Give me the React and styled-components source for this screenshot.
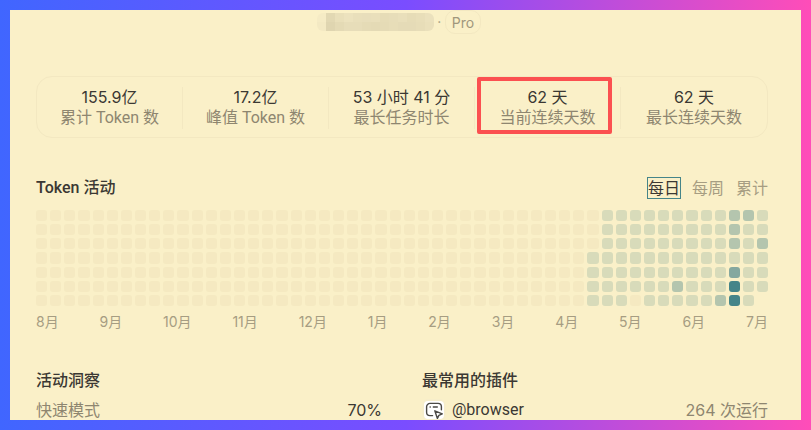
import React, { useState } from 'react';

import styled, { createGlobalStyle } from 'styled-components';

const stats = [
  { value: '155.9亿', label: '累计 Token 数' },
  { value: '17.2亿', label: '峰值 Token 数' },
  { value: '53 小时 41 分', label: '最长任务时长' },
  { value: '62 天', label: '当前连续天数', marked: true },
  { value: '62 天', label: '最长连续天数' },
];

const ranges = ['每日', '每周', '累计'];

const months = ['8月', '9月', '10月', '11月', '12月', '1月', '2月', '3月', '4月', '5月', '6月', '7月'];

const levelColors = ['#f5e9c1', '#d8dbba', '#b4c5ae', '#85a89f', '#458589'];

// weeks before the first active one are all zero
const emptyWeeks = Array(39).fill('0000000');
const activeWeeks = [
  '0001111',
  '1111111',
  '1111111',
  '1111110',
  '1111111',
  '1111111',
  '1111121',
  '1111111',
  '1111111',
  '1111112',
  '2221344',
  '2111111',
  '112111',
];
const days = [...emptyWeeks, ...activeWeeks].join('').split('').map(Number);

// two rows of nine pixel blocks hiding the account name
const maskRows = [
  ['#f5ebc5', '#e2d8b3', '#e9dfba', '#ece2be', '#e9dfbb', '#e8debb', '#e9dfbb', '#e6dcb7', '#e7ddb9', '#e9dfbb', '#e6dcb7', '#e8deb9', '#ebe1bd'],
  ['#f3e9c3', '#dfd5b0', '#e4dab5', '#e7ddb9', '#e7ddb9', '#e5dbb6', '#e4dab5', '#e5dbb6', '#e7ddb8', '#e5dbb7', '#e5dbb7', '#e7ddb8', '#eae0bb'],
];

const NameMask = () => (
  <svg width='117' height='18' viewBox='0 0 117 18' aria-hidden='true'>
    <clipPath id='mask-shape'>
      <rect width='117' height='18' rx='6' />
    </clipPath>
    <g clipPath='url(#mask-shape)' shapeRendering='crispEdges'>
      {maskRows.map((row, y) =>
        row.map((fill, x) => <rect key={`${x}-${y}`} x={x * 9} y={y * 9} width='9' height='9' fill={fill} />)
      )}
    </g>
  </svg>
);

const BrowserIcon = () => (
  <svg width='20' height='20' viewBox='0 0 20 20' fill='none' stroke='#4b4945' strokeWidth='1.4' aria-hidden='true'>
    <path d='M8.6 15.6H6A3.4 3.4 0 0 1 2.6 12.2V6.8A3.4 3.4 0 0 1 6 3.4h8a3.4 3.4 0 0 1 3.4 3.4v3' strokeLinecap='round' />
    <path d='M5.6 7h1.2M8.8 7h5' />
    <path d='M10.8 10.8l2.6 7.6 1.5-3 3.4-1.5z' strokeLinejoin='round' />
  </svg>
);

const App = () => {
  const [range, setRange] = useState('每日');

  return (
    <Frame>
      <GlobalStyle />
      <Panel>
        <Account>
          <NameMask />
          <Dot>·</Dot>
          <Plan>Pro</Plan>
        </Account>

        <Stats>
          {stats.map((stat) => (
            <Stat key={stat.label}>
              <dd>{stat.value}</dd>
              <dt>{stat.label}</dt>
              {stat.marked && <Marker />}
            </Stat>
          ))}
        </Stats>

        <SectionHeader>
          <Title>Token 活动</Title>
          <Ranges>
            {ranges.map((name) => (
              <RangeButton key={name} type='button' $active={name === range} onClick={() => setRange(name)}>
                {name}
              </RangeButton>
            ))}
          </Ranges>
        </SectionHeader>
        <Heatmap>
          {days.map((level, i) => (
            <Day key={i} $level={level} />
          ))}
        </Heatmap>
        <Months>
          {months.map((month) => (
            <span key={month}>{month}</span>
          ))}
        </Months>

        <Columns>
          <section>
            <Title>活动洞察</Title>
            <Row>
              <Muted>快速模式</Muted>
              <span>70%</span>
            </Row>
          </section>
          <section>
            <Title>最常用的插件</Title>
            <Row>
              <Plugin>
                <PluginIcon>
                  <BrowserIcon />
                </PluginIcon>
                @browser
              </Plugin>
              <Muted>264 次运行</Muted>
            </Row>
          </section>
        </Columns>
      </Panel>
    </Frame>
  );
};

const labelFont = "Roboto, 'Noto Sans CJK SC', sans-serif";

const GlobalStyle = createGlobalStyle`
  * {
    box-sizing: border-box;
  }
  body {
    margin: 0;
    font-family: Inter, 'Noto Sans CJK SC', sans-serif;
    font-size: 16px;
    line-height: 20px;
    color: #3b3833;
  }
`;

const Frame = styled.div`
  height: 100vh;
  padding: 10px;
  background: linear-gradient(90deg, #4066ff, #7a4dff 50%, #ff4db8);
`;

const Panel = styled.main`
  height: 100%;
  padding: 0 33px 0 26px;
  overflow: hidden;
  background: #faf0c8;
`;

const Account = styled.header`
  display: flex;
  align-items: center;
  justify-content: center;
  height: 24px;
  padding-right: 6px;
`;

const Dot = styled.span`
  width: 11px;
  text-align: center;
  font-size: 14px;
  color: #a59c80;
`;

const Plan = styled.span`
  padding: 2px 6px 0;
  border: 1px solid #f3e8c1;
  border-radius: 10px;
  font-size: 14px;
  color: #a0977c;
`;

const Stats = styled.dl`
  display: grid;
  grid-template-columns: repeat(5, 1fr);
  margin: 42px 0 39px;
  padding: 10px 0 8px;
  border: 1px solid #f3e8c1;
  border-radius: 16px;
`;

const Stat = styled.div`
  position: relative;
  display: flex;
  flex-direction: column;
  text-align: center;
  border-right: 1px solid #f3e8c1;
  &:last-child {
    border-right: none;
  }
  dd {
    margin: 0;
  }
  dt {
    font-family: ${labelFont};
    line-height: 22px;
    color: #8e8670;
  }
`;

const Marker = styled.span`
  position: absolute;
  inset: -10px 8px -5px 2px;
  border: 4px solid #fb5050;
  border-radius: 2px;
`;

const SectionHeader = styled.div`
  display: flex;
  align-items: center;
  justify-content: space-between;
  margin-bottom: 11px;
`;

const Title = styled.h2`
  margin: 0;
  font-family: ${labelFont};
  font-size: 16px;
  font-weight: 500;
  line-height: 22px;
`;

const Ranges = styled.div`
  display: flex;
  gap: 12px;
`;

const RangeButton = styled.button`
  padding: 0;
  border: none;
  background: none;
  font: inherit;
  cursor: pointer;
  color: ${({ $active }) => ($active ? '#3b3833' : '#a69d82')};
  outline: ${({ $active }) => ($active ? '1px solid #458589' : 'none')};
`;

const Heatmap = styled.div`
  display: grid;
  grid-template-rows: repeat(7, auto);
  grid-auto-flow: column;
  grid-auto-columns: 1fr;
  gap: 3px;
`;

const Day = styled.span`
  aspect-ratio: 1;
  border-radius: 3px;
  background: ${({ $level }) => levelColors[$level]};
`;

const Months = styled.div`
  display: flex;
  justify-content: space-between;
  margin-top: 6px;
  font-size: 14px;
  color: #a69d82;
`;

const Columns = styled.div`
  display: grid;
  grid-template-columns: 1fr 1fr;
  gap: 40px;
  margin-top: 38px;
`;

const Row = styled.div`
  display: flex;
  align-items: center;
  justify-content: space-between;
  height: 20px;
  margin-top: 8px;
`;

const Muted = styled.span`
  color: #8e8670;
`;

const Plugin = styled.span`
  display: flex;
  align-items: center;
  gap: 6px;
  font-family: ${labelFont};
`;

const PluginIcon = styled.span`
  display: flex;
  align-items: center;
  justify-content: center;
  width: 24px;
  height: 22px;
  border: 2px solid #f7eecb;
  border-radius: 6px;
  background: #ffffff;
`;

export default App;
